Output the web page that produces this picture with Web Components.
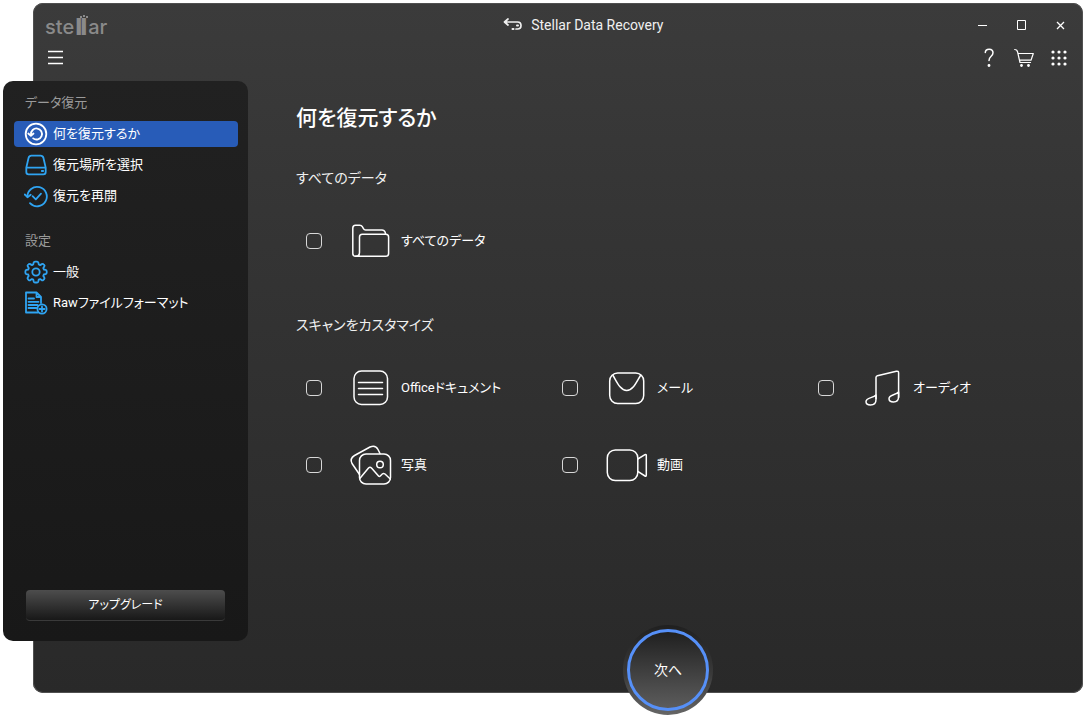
<!DOCTYPE html>
<html lang="ja">
<head>
<meta charset="utf-8">
<meta name="viewport" content="width=device-width, initial-scale=1">
<title>Stellar Data Recovery</title>
<style>
  body {
    margin: 0;
    background: #fff;
    color: #fff;
    font: 14px/20px Roboto, "Noto Sans CJK JP", sans-serif;
    font-feature-settings: "palt";
  }
</style>
</head>
<body>
<recovery-window>
  <title-bar slot="title">Stellar Data Recovery</title-bar>
  <tool-bar slot="tools"></tool-bar>
  <side-panel slot="side">
    <nav-group heading="データ復元">
      <nav-item icon="restore" current>何を復元するか</nav-item>
      <nav-item icon="drive">復元場所を選択</nav-item>
      <nav-item icon="resume">復元を再開</nav-item>
    </nav-group>
    <nav-group heading="設定">
      <nav-item icon="gear">一般</nav-item>
      <nav-item icon="raw">Rawファイルフォーマット</nav-item>
    </nav-group>
  </side-panel>
  <recovery-options heading="何を復元するか">
    <option-group heading="すべてのデータ">
      <data-option icon="folder">すべてのデータ</data-option>
    </option-group>
    <option-group heading="スキャンをカスタマイズ">
      <data-option icon="document">Officeドキュメント</data-option>
      <data-option icon="mail">メール</data-option>
      <data-option icon="audio">オーディオ</data-option>
      <data-option icon="photo">写真</data-option>
      <data-option icon="video">動画</data-option>
    </option-group>
  </recovery-options>
  <next-button slot="next">次へ</next-button>
</recovery-window>

<script>
const ICONS = {
  restore: `<circle cx="12" cy="12" r="10.3"/><path d="M7 12.500A5.500 5.500 0 1 1 9.200 16.400"/><path d="M4.300 11.500 6.900 13.800 9.500 11.500"/>`,
  drive: `<path d="M2.300 14.600 4.600 4.800Q5.200 2.600 7.400 2.600H16.600Q18.800 2.600 19.400 4.800L21.700 14.600V19Q21.700 21.300 19.400 21.300H4.600Q2.300 21.300 2.300 19ZM2.300 14.600H21.700M17.800 18h1.400"/>`,
  resume: `<path d="M3.400 12.800A9.700 9.700 0 1 1 6 19.200"/><path d="M.8 10.500l2.700 2.700 3.200-2.400"/><path d="M8.600 12.200l3.200 3.100 5.200-5.600"/>`,
  gear: `<path d="M9.600 2.800Q9.900 1.600 11 1.600h2Q14.100 1.600 14.400 2.800l.4 1.700 1.300.6 1.700-1Q18.900 3.500 19.600 4.300l.6.600Q21 5.500 20.300 6.600l-1 1.500.5 1.400 1.800.4Q22.700 10.200 22.700 11.200v1.600Q22.700 13.800 21.500 14.100l-1.700.4-.5 1.400 1 1.600Q20.900 18.500 20.100 19.200l-.8.8Q18.500 20.600 17.600 20.100l-1.500-1-1.400.6-.4 1.700Q14 22.500 13 22.500h-2Q10 22.500 9.700 21.400l-.4-1.700-1.400-.6-1.500 1Q5.500 20.600 4.700 20l-.8-.8Q3.200 18.500 3.700 17.500l1-1.600-.5-1.400-1.700-.4Q1.400 13.800 1.400 12.800v-1.600Q1.400 10.200 2.500 9.900l1.800-.4.5-1.400-1-1.500Q3.200 5.500 3.900 4.900l.6-.6Q5.200 3.500 6.300 4.100l1.700 1 1.200-.6Z"/><circle cx="12" cy="12" r="3.700"/>`,
  raw: `<path d="M17 12V6L12.500 1.500H2V21.500H14M12.500 1.500V6H17M4.500 7.500h5.500M4.500 10.800h10M4.500 14h9M4.500 17h8"/><circle cx="18" cy="18" r="4.600"/><path d="M18 15.500v5M15.500 18h5"/>`,
  folder: `<path d="M9.500 36.300H5.500Q2.800 36.300 2.800 33.500V8Q2.800 5.200 5.500 5.200H9.800Q11.500 5.200 12.300 6.600L13.600 8.800Q14.200 9.900 15.500 9.900H32Q34.400 9.900 35.200 12.300L35.600 14.200"/><path d="M5.500 36.300Q9.500 36.300 9.500 32.500V17Q9.500 14.200 12.300 14.200H35.800Q38.600 14.200 38.600 17V33.500Q38.600 36.300 35.800 36.300H5.500"/>`,
  document: `<rect x="4" y="4" width="33.500" height="33.500" rx="7.500"/><path d="M8.500 15.500H32.500M8.500 21.500H32.500M8.500 27.500H32.500"/>`,
  mail: `<rect x="3.700" y="6" width="34" height="30.500" rx="8"/><path d="M7 8.500C10.500 14 14 23.500 20.700 23.500S31 14 34.500 8.500"/>`,
  audio: `<path d="M14 31.500V10.500Q14 9.200 15.400 8.800L34.300 4.200Q36.600 3.800 36.600 6V30.500"/><path d="M14 28.500V32.500C14 36 12 38 8.500 38Q4 38 4 34.800C4 30 11 31.500 14 28M36.600 25.500V29.500C36.600 33 34.500 35 31.500 35Q27 35 27 31.800C27 27.500 33.500 28.500 36.600 25"/>`,
  photo: `<rect x="9.500" y="10" width="31" height="30" rx="6.500"/><circle cx="30" cy="20.500" r="3.300"/><path d="M9.800 34.500 18.500 24Q20 22.500 21.500 24L28.500 32Q29.300 33 30.300 32L32.300 30Q33.500 29 35 30L40.300 35"/><path d="M9.500 30.500 2 19.500Q-.5 14.500 4.500 11.500L20 3Q25.500.5 28 5.500L30 9.500"/>`,
  video: `<rect x="1.300" y="6" width="30.500" height="30.500" rx="8"/><path d="M31.800 15 39 10.600Q40.300 10 40.300 11.500V31Q40.300 32.700 39 32L31.800 27.300"/>`
};

const icon = (name, size, box) =>
  `<svg width="${size}" height="${size}" viewBox="0 0 ${box} ${box}" aria-hidden="true">${ICONS[name]}</svg>`;

function define(name, render) {
  customElements.define(name, class extends HTMLElement {
    constructor() {
      super();
      this.attachShadow({ mode: "open" });
    }
    connectedCallback() {
      this.shadowRoot.innerHTML = render(this);
    }
  });
}

const BASE = `
  *, *::before { box-sizing: border-box; }
  button { font: inherit; font-feature-settings: inherit; color: inherit; border: 0; padding: 0; background: none; }
  svg { display: block; flex: none; fill: none; stroke: currentColor; stroke-linecap: round; stroke-linejoin: round; }
`;

define("recovery-window", () => `
  <style>${BASE}
    :host { display: flex; padding: 3px 7px 35px 33px; min-height: 100vh; box-sizing: border-box; }
    .frame {
      flex: 1; position: relative; display: flex; flex-direction: column;
      border-radius: 10px;
      background: linear-gradient(#3b3b3b, #343434 35%, #292929);
      box-shadow: inset 0 0 0 1px #505050;
    }
    .body { flex: 1; display: flex; gap: 5px; padding: 12px 0 52px; }
    .main { flex: 1; min-width: 0; }
  </style>
  <div class="frame">
    <slot name="title"></slot>
    <slot name="tools"></slot>
    <div class="body">
      <slot name="side"></slot>
      <main class="main"><slot></slot></main>
    </div>
    <slot name="next"></slot>
  </div>`);

define("title-bar", () => `
  <style>${BASE}
    :host { display: grid; grid-template-columns: 11fr auto 10fr; align-items: center; height: 44px; padding: 0 3px 0 12px; }
    .logo { display: flex; align-items: baseline; padding-top: 3px; color: #8a8a8a; font: 500 20px/24px Inter, sans-serif; }
    .bars { position: relative; padding: 0 2px; -webkit-text-stroke: 2px currentColor; }
    .bars svg { position: absolute; right: 0; top: 0; fill: currentColor; stroke: none; }
    .title { display: flex; align-items: center; gap: 8px; color: #f0f0f0; }
    .controls { display: flex; justify-content: flex-end; }
    button { width: 39px; height: 30px; display: grid; place-items: center; }
    .controls svg { stroke-linecap: butt; stroke-linejoin: miter; }
  </style>
  <div class="logo"><span>ste</span><span class="bars">ll<svg width="8" height="3" viewBox="0 0 8 3"><path d="M0 1h2v2H0zM3 0h2v2H3zM6 1h2v2H6z"/></svg></span><span>ar</span></div>
  <div class="title">
    <svg width="20" height="16" viewBox="0 0 20 16" stroke-width="1.700"><path d="M5 2 1.500 5 5 8M1.500 5H14.500Q18 5 18 8.500T14.500 12H13"/><path d="M9.500 12h1M14 8.500h1" stroke-width="2"/></svg>
    <slot></slot>
  </div>
  <div class="controls">
    <button aria-label="最小化"><svg width="11" height="11"><path d="M1 5.500h9"/></svg></button>
    <button aria-label="最大化"><svg width="11" height="11"><path d="M1.500.5h8v9h-8z"/></svg></button>
    <button aria-label="閉じる"><svg width="11" height="11" stroke-width="1.300"><path d="M2 2l7 7M9 2 2 9"/></svg></button>
  </div>`);

define("tool-bar", () => `
  <style>${BASE}
    :host { display: flex; align-items: center; height: 22px; padding: 0 7px 0 5px; }
    button { width: 35px; height: 22px; display: grid; place-items: center; }
    .menu { margin-right: auto; }
    .dots { fill: currentColor; stroke: none; }
  </style>
  <button class="menu" aria-label="メニュー"><svg width="16" height="16" stroke-width="1.500"><path d="M0 1.500h15M0 7.500h15M0 13.500h15" stroke-linecap="butt"/></svg></button>
  <button aria-label="ヘルプ"><svg width="20" height="20" viewBox="0 0 20 20" stroke-width="1.500"><path d="M6.300 4.500C6.500 0 14 0 14 4.800 14 8.500 10 8 10 12.500"/><circle cx="10" cy="17.500" r=".7" fill="currentColor"/></svg></button>
  <button aria-label="カート"><svg width="20" height="20" viewBox="0 0 20 20" stroke-width="1.200"><path d="M.7 1.500Q3 1.500 3.600 4L6 14.500H16.500M4 5.500H19.300L17 12.200H5.500"/><circle cx="7.500" cy="17.500" r=".8" fill="currentColor"/><circle cx="14.500" cy="17.500" r=".8" fill="currentColor"/></svg></button>
  <button aria-label="アプリ一覧"><svg class="dots" width="16" height="16" viewBox="0 0 16 16">${[2, 8, 14].map(y => [2, 8, 14].map(x => `<circle cx="${x}" cy="${y}" r="1.600"/>`).join("")).join("")}</svg></button>`);

define("side-panel", () => `
  <style>${BASE}
    :host {
      flex: none; width: 245px; margin-left: -30px; box-sizing: border-box;
      display: flex; flex-direction: column; padding: 9px 10px 20px 11px;
      border-radius: 10px; background: linear-gradient(#212121, #181818);
      font-size: 13px;
    }
    nav { display: flex; flex-direction: column; gap: 19px; }
    button {
      margin: auto 13px 0 12px; height: 31px; border-radius: 4px; font-size: 12px;
      background: linear-gradient(#4d4d4d, #181818); border-bottom: 1px solid #3a3a3a;
    }
  </style>
  <nav><slot></slot></nav>
  <button>アップグレード</button>`);

define("nav-group", el => `
  <style>${BASE}
    :host { display: flex; flex-direction: column; gap: 5px; }
    h2 { margin: 0; padding: 0 11px; font: inherit; line-height: 26px; color: #9a9a9a; }
  </style>
  <h2>${el.getAttribute("heading")}</h2>
  <slot></slot>`);

define("nav-item", el => `
  <style>${BASE}
    :host { display: block; color: #fff; }
    a { display: flex; align-items: center; gap: 5px; height: 26px; padding: 0 10px; border-radius: 4px; color: inherit; text-decoration: none; }
    svg { stroke: #2fa4f2; stroke-width: 1.800px; }
    :host([current]) a { background: #285cb8; }
    :host([current]) svg { stroke: #fff; }
  </style>
  <a href="#${el.getAttribute("icon")}">${icon(el.getAttribute("icon"), 24, 24)}<span><slot></slot></span></a>`);

define("recovery-options", el => `
  <style>${BASE}
    :host { display: flex; flex-direction: column; gap: 51px; padding: 22px 19px 0 43px; }
    header { margin-bottom: -18px; }
    h1 { margin: 0; font-size: 21px; line-height: 30px; font-weight: 500; }
  </style>
  <header><h1>${el.getAttribute("heading")}</h1></header>
  <slot></slot>`);

define("option-group", el => `
  <style>${BASE}
    :host { display: block; }
    h2 { margin: 0 0 30px; font-size: 14px; line-height: 24px; font-weight: 400; color: #f0f0f0; }
    .grid { display: grid; grid-template-columns: repeat(3, 1fr); row-gap: 35px; }
  </style>
  <h2>${el.getAttribute("heading")}</h2>
  <div class="grid"><slot></slot></div>`);

define("data-option", el => `
  <style>${BASE}
    :host { display: block; font-size: 13px; }
    label { display: flex; align-items: center; height: 42px; padding-left: 10px; gap: 9px; }
    input { appearance: none; width: 16px; height: 16px; margin: 0 19px 0 0; border: 1px solid #d8d8d8; border-radius: 4px; }
    input:checked { background: #5b92f5; }
    svg { stroke-width: 1.500px; overflow: visible; }
  </style>
  <label><input type="checkbox">${icon(el.getAttribute("icon"), 42, 42)}<span><slot></slot></span></label>`);

define("next-button", () => `
  <style>${BASE}
    :host {
      position: absolute; bottom: -22px; left: 220px; right: 0; margin: 0 auto; width: 90px; height: 90px;
      box-sizing: border-box; padding: 4px; border-radius: 50%; background: linear-gradient(#202020, #3a3a3a 55%, #666);
    }
    button { width: 100%; height: 100%; border-radius: 50%; border: 3px solid #5690f8; background: linear-gradient(#202020, #5c5c5c); }
  </style>
  <button><slot></slot></button>`);
</script>
</body>
</html>
